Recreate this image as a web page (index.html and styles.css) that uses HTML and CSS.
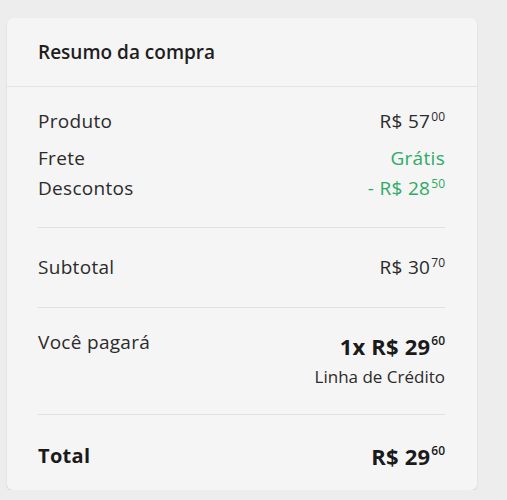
FILE: index.html
```html
<!DOCTYPE html>
<html lang="pt-BR">
<head>
<meta charset="utf-8">
<link rel="stylesheet" href="styles.css">
</head>
<body>
<div class="card">
  <div class="card-header">Resumo da compra</div>
  <div class="card-body">
    <div class="section section-first">
      <div class="row row-product">
        <span class="label">Produto</span>
        <span class="value">R$ 57<sup class="cents">00</sup></span>
      </div>
      <div class="row row-ship">
        <span class="label">Frete</span>
        <span class="value green">Grátis</span>
      </div>
      <div class="row">
        <span class="label">Descontos</span>
        <span class="value green">- R$ 28<sup class="cents">50</sup></span>
      </div>
    </div>
    <div class="section section-sub">
      <div class="row">
        <span class="label">Subtotal</span>
        <span class="value">R$ 30<sup class="cents">70</sup></span>
      </div>
    </div>
    <div class="section section-pay">
      <div class="row row-top">
        <span class="label">Você pagará</span>
        <div class="pay">
          <span class="amount">1x R$ 29<sup class="cents">60</sup></span>
          <span class="method">Linha de Crédito</span>
        </div>
      </div>
    </div>
    <div class="section section-last">
      <div class="row">
        <span class="total-label">Total</span>
        <span class="amount">R$ 29<sup class="cents">60</sup></span>
      </div>
    </div>
  </div>
</div>
</body>
</html>
```
FILE: styles.css
```css
html, body {
  margin: 0;
  padding: 0;
}
body {
  background: #ededed;
  font-family: "Open Sans", "Noto Sans", sans-serif;
  color: #2b2b2b;
  padding: 18px 0 0 7px;
}
.card {
  width: 470px;
  box-sizing: border-box;
  background: #f5f5f5;
  border-radius: 6px;
  box-shadow: 0 1px 2px rgba(0,0,0,0.12);
}
.card-header {
  height: 69px;
  box-sizing: border-box;
  padding: 22px 31px 0;
  font-size: 19px;
  line-height: 24px;
  font-weight: 600;
  color: #1e1e1e;
  border-bottom: 1px solid #e4e4e4;
}
.card-body {
  padding: 0 32px 0 31px;
}
.section {
  border-bottom: 1px solid #e0e0e0;
}
.section-first {
  padding: 23px 0 28px;
}
.section-sub {
  padding: 28px 0 29px;
}
.section-pay {
  padding: 23px 0 27px;
}
.section-last {
  border-bottom: none;
  padding: 28px 0 21px;
}
.row {
  display: flex;
  justify-content: space-between;
  align-items: center;
  font-size: 19px;
  line-height: 22px;
  letter-spacing: 0.3px;
}
.row-top {
  align-items: flex-start;
}
.row-product {
  margin-bottom: 15px;
}
.row-ship {
  margin-bottom: 8px;
}
.label {
  color: #2b2b2b;
}
.value {
  color: #2b2b2b;
  white-space: nowrap;
}
.green {
  color: #2eab66;
}
.amount {
  font-size: 22px;
  line-height: 26px;
  font-weight: 700;
  color: #1a1a1a;
  white-space: nowrap;
  letter-spacing: 0.2px;
}
.total-label {
  font-size: 20px;
  line-height: 26px;
  font-weight: 700;
  color: #1a1a1a;
}
.cents {
  font-size: 12px;
  vertical-align: top;
  position: relative;
  top: 1px;
  margin-left: 1px;
  line-height: 1;
  letter-spacing: 0;
}
.amount .cents {
  font-weight: 600;
  top: 2px;
}
.pay {
  display: flex;
  flex-direction: column;
  align-items: flex-end;
  padding-top: 2px;
}
.method {
  font-size: 17px;
  line-height: 20px;
  margin-top: 8px;
  letter-spacing: 0;
  color: #2b2b2b;
}
```
